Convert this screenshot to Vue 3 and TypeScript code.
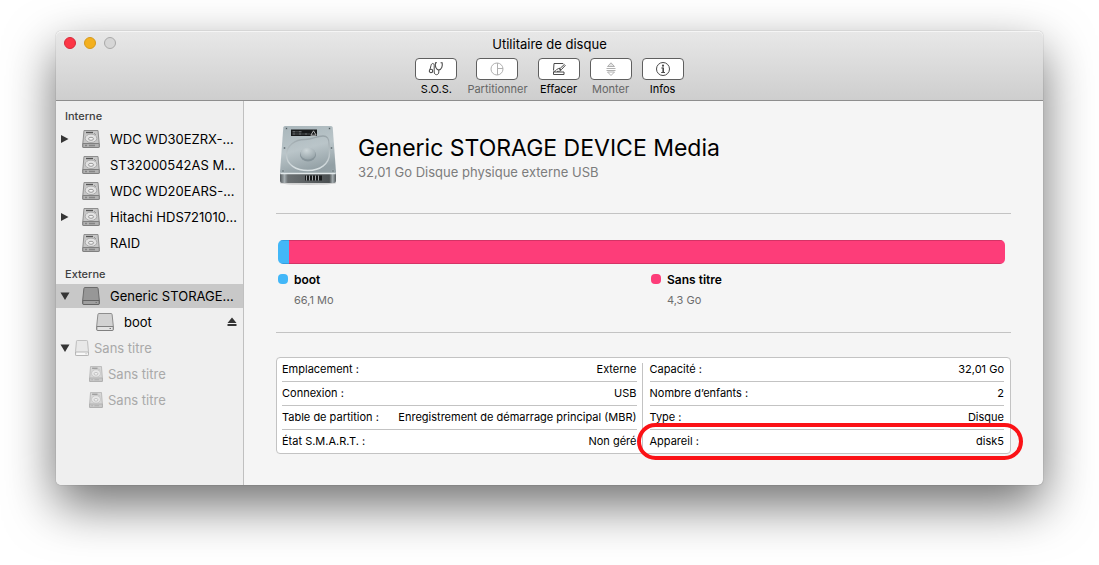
<script setup lang="ts">
import { ref } from 'vue'

interface Tool {
  id: string
  label: string
  enabled: boolean
}

interface TreeRow {
  id: string
  name: string
  icon: 'internal' | 'external'
  arrow?: 'closed' | 'open'
  level: 'drive' | 'volume' | 'ghost' | 'ghost-child'
  eject?: boolean
}

interface Info {
  label: string
  value: string
  marked?: boolean
}

const tools: Tool[] = [
  { id: 'sos', label: 'S.O.S.', enabled: true },
  { id: 'partition', label: 'Partitionner', enabled: false },
  { id: 'erase', label: 'Effacer', enabled: true },
  { id: 'mount', label: 'Monter', enabled: false },
  { id: 'info', label: 'Infos', enabled: true },
]

const groups: { title: string; rows: TreeRow[] }[] = [
  {
    title: 'Interne',
    rows: [
      { id: 'wd30', name: 'WDC WD30EZRX-…', icon: 'internal', arrow: 'closed', level: 'drive' },
      { id: 'st32', name: 'ST32000542AS M…', icon: 'internal', level: 'drive' },
      { id: 'wd20', name: 'WDC WD20EARS-…', icon: 'internal', level: 'drive' },
      { id: 'hitachi', name: 'Hitachi HDS721010…', icon: 'internal', arrow: 'closed', level: 'drive' },
      { id: 'raid', name: 'RAID', icon: 'internal', level: 'drive' },
    ],
  },
  {
    title: 'Externe',
    rows: [
      { id: 'generic', name: 'Generic STORAGE…', icon: 'external', arrow: 'open', level: 'drive' },
      { id: 'boot', name: 'boot', icon: 'external', level: 'volume', eject: true },
      { id: 'untitled', name: 'Sans titre', icon: 'external', arrow: 'open', level: 'ghost' },
      { id: 'untitled-1', name: 'Sans titre', icon: 'internal', level: 'ghost-child' },
      { id: 'untitled-2', name: 'Sans titre', icon: 'internal', level: 'ghost-child' },
    ],
  },
]

const selected = ref('generic')

const partitions = [
  { name: 'boot', size: '66,1 Mo', tone: 'blue', share: 1.5 },
  { name: 'Sans titre', size: '4,3 Go', tone: 'pink', share: 98.5 },
]

const infoTables: Info[][] = [
  [
    { label: 'Emplacement :', value: 'Externe' },
    { label: 'Connexion :', value: 'USB' },
    { label: 'Table de partition :', value: 'Enregistrement de démarrage principal (MBR)' },
    { label: 'État S.M.A.R.T. :', value: 'Non géré' },
  ],
  [
    { label: 'Capacité :', value: '32,01 Go' },
    { label: 'Nombre d’enfants :', value: '2' },
    { label: 'Type :', value: 'Disque' },
    { label: 'Appareil :', value: 'disk5', marked: true },
  ],
]
</script>

<template>
  <div class="desktop">
    <div class="window">
      <header class="titlebar">
        <div class="lights">
          <button class="light close" type="button" aria-label="Fermer"></button>
          <button class="light minimize" type="button" aria-label="Réduire"></button>
          <button class="light zoom" type="button" aria-label="Agrandir" disabled></button>
        </div>
        <h1 class="window-title">Utilitaire de disque</h1>
        <div class="toolbar">
          <div v-for="t in tools" :key="t.id" class="tool" :class="{ off: !t.enabled }">
            <button
              class="tool-button"
              type="button"
              :disabled="!t.enabled"
              :aria-labelledby="'tool-' + t.id"
            >
              <svg v-if="t.id === 'sos'" width="16" height="16" viewBox="0 0 16 16" fill="none" stroke="currentColor">
                <path d="M9 1.700H7.500C6.800 5 7.800 8.500 10.800 9c3-.5 4-4 3.300-7.300h-1.500" stroke-width="1.100" />
                <path d="M10.800 9v2c0 1.700-1 2.700-2.300 2.700S6.200 12.700 6.200 11V4.500c0-1.200-.5-2-1.400-2S3.300 3.200 3 4.500L2 8.500" stroke-width="1" />
                <circle cx="3" cy="10" r="1.700" stroke-width="1.100" />
              </svg>
              <svg v-else-if="t.id === 'partition'" width="16" height="16" viewBox="0 0 16 16" fill="none" stroke="currentColor">
                <circle cx="8" cy="8" r="6" />
                <path d="M8.500 2v12M8.500 7.500H14" />
              </svg>
              <svg v-else-if="t.id === 'erase'" width="16" height="16" viewBox="0 0 16 16" fill="none" stroke="currentColor">
                <path d="M12 3V2.500H3L2.500 9.500" />
                <path d="M2.500 11h10.500v2.500H2.500z" />
                <path d="M2.500 10.500c2.500.3 3-2.700 5-3l1.800-.3L13.300 3.500l.9 1L10.500 8.500c-.3 1.600-2.500 1.900-4.500 1.900" />
                <path d="M8 7.500 10 9" stroke-width="1.300" />
              </svg>
              <svg v-else-if="t.id === 'mount'" width="16" height="16" viewBox="0 0 16 16" fill="none" stroke="currentColor">
                <path d="M4.500 5.500 8 1.800l3.500 3.700z" fill="currentColor" fill-opacity=".35" />
                <path d="M3.500 7.500h9M3.500 9.500h9" />
                <path d="M4.500 11h7L8 14.500z" />
              </svg>
              <svg v-else width="16" height="16" viewBox="0 0 16 16" fill="none" stroke="currentColor">
                <circle cx="8" cy="8" r="6.500" />
                <circle cx="8" cy="4.700" r="1.100" fill="currentColor" stroke="none" />
                <path d="M6.300 7H8M6.200 11.500h3.800" />
                <path d="M8.200 6.500v5" stroke-width="1.600" />
              </svg>
            </button>
            <span :id="'tool-' + t.id" class="tool-label">{{ t.label }}</span>
          </div>
        </div>
      </header>

      <div class="body">
        <nav class="sidebar" aria-label="Disques">
          <section v-for="g in groups" :key="g.title" class="group">
            <h2 class="group-title">{{ g.title }}</h2>
            <ul class="rows">
              <li
                v-for="r in g.rows"
                :key="r.id"
                class="row"
                :class="[r.level, { selected: r.id === selected }]"
              >
                <span class="arrow-slot">
                  <button v-if="r.arrow" class="arrow" type="button" :aria-label="'Développer ' + r.name" :aria-expanded="r.arrow === 'open'">
                    <svg width="10" height="10" viewBox="0 0 10 10" fill="#353535">
                      <path v-if="r.arrow === 'closed'" d="M1 1v8l7.500-4z" />
                      <path v-else d="M.5 1.500h9L5 9z" />
                    </svg>
                  </button>
                </span>
                <button class="pick" type="button" @click="selected = r.id">
                  <svg class="disk-icon" viewBox="0 0 18 18" preserveAspectRatio="none">
                    <template v-if="r.icon === 'internal'">
                      <path class="shell" d="M2 .5h14l1.200 13v3.500q0 .5-.5.5H1.300q-.5 0-.5-.5v-3.500z" />
                      <path class="front" d="M.8 13.500h16.400v3.500q0 .5-.5.5H1.300q-.5 0-.5-.5z" />
                      <path d="M4 2.500h7" stroke="#555" stroke-width="1.300" />
                      <ellipse cx="9" cy="8.300" rx="5.800" ry="4.200" fill="#e2e2e2" stroke="#a0a0a0" stroke-width=".8" />
                      <ellipse cx="9" cy="8.800" rx="2.500" ry="1.500" fill="#f5f5f5" stroke="#858585" stroke-width=".8" />
                      <path d="m12 3 2 2" stroke="#999" />
                      <path d="M3 15.500h2M7 15.500h6" stroke="#858585" stroke-width="1.300" />
                    </template>
                    <template v-else>
                      <path class="shell" d="M3 .5h12q1 0 1.100 1l1.200 11.500v3.500q0 1-1 1H1.700q-1 0-1-1V13L1.900 1.500q.1-1 1.100-1z" />
                      <path class="front" d="M.8 13.500h16.400v3q0 1-1 1H1.800q-1 0-1-1z" />
                      <path d="M13.500 15.500h1.500" stroke="#777" />
                    </template>
                  </svg>
                  <span class="name">{{ r.name }}</span>
                </button>
                <button v-if="r.eject" class="eject" type="button" aria-label="Éjecter boot">
                  <svg width="10" height="10" viewBox="0 0 10 10" fill="#353535">
                    <path d="M5 .5 9.500 6h-9zM.5 7h9v2h-9z" />
                  </svg>
                </button>
              </li>
            </ul>
          </section>
        </nav>

        <main class="detail">
          <div class="summary">
            <svg class="hero" width="60" height="64" viewBox="0 0 60 64" aria-hidden="true">
              <defs>
                <linearGradient id="plate" x1="0" y1="0" x2=".3" y2="1">
                  <stop offset="0" stop-color="#a9b6bb" />
                  <stop offset=".55" stop-color="#bac5c9" />
                  <stop offset="1" stop-color="#93a0a5" />
                </linearGradient>
                <linearGradient id="rim" x1="0" y1="0" x2="0" y2="1">
                  <stop offset="0" stop-color="#98a3a8" />
                  <stop offset="1" stop-color="#dbe3e5" />
                </linearGradient>
                <linearGradient id="edge" x1="0" y1="0" x2="1" y2="0">
                  <stop offset="0" stop-color="#555b5e" />
                  <stop offset=".08" stop-color="#a5adb0" />
                  <stop offset=".14" stop-color="#6b7072" />
                  <stop offset=".88" stop-color="#4b5052" />
                  <stop offset=".94" stop-color="#a5adb0" />
                  <stop offset="1" stop-color="#555b5e" />
                </linearGradient>
                <radialGradient id="hub" cx=".4" cy=".25" r=".8">
                  <stop offset="0" stop-color="#cdd6d9" />
                  <stop offset="1" stop-color="#95a2a7" />
                </radialGradient>
              </defs>
              <ellipse cx="30" cy="60" rx="28" ry="2" fill="#000" opacity=".15" />
              <path d="M2 50h56v8q0 2-2 2H4q-2 0-2-2z" fill="url(#edge)" />
              <path d="M7 3h46q1.500 0 1.700 1.500L58 49q0 2-2 2H4q-2 0-2-2L5.300 4.500Q5.500 3 7 3z" fill="url(#plate)" />
              <path d="M2.300 50.500h55.400" stroke="#e3e9eb" stroke-width="1.300" />
              <path d="M27 16.500C35 16.500 38 13 45 13c5 0 6 3 6 8l.5 9C51.500 41 42 47.500 30 47.500S8.500 41.500 8.500 32 17 16.500 27 16.500z" fill="none" stroke="url(#rim)" stroke-width="1.400" />
              <ellipse cx="30" cy="32" rx="8" ry="6.500" fill="#87949a" />
              <ellipse cx="30" cy="30.500" rx="7.500" ry="6" fill="url(#hub)" />
              <path d="M13 6.500h26V13H13z" fill="#17191a" />
              <path d="M14.500 8.800h10M14.500 11h17" stroke="#8d9395" stroke-width=".9" stroke-dasharray="3 1 1 1" />
              <path d="m35.500 7.800 2.700 4.400h-5.400z" fill="none" stroke="#ddd" stroke-width=".8" />
              <g fill="#4a585e" stroke="#c6cdd0" stroke-width=".4">
                <circle cx="8.500" cy="5.500" r="1" /><circle cx="51.500" cy="5.500" r="1" />
                <circle cx="6.500" cy="25" r="1" /><circle cx="53.500" cy="25" r="1" />
                <circle cx="5" cy="48" r="1" /><circle cx="55" cy="48" r="1" />
              </g>
              <path d="M27 52.500h17v5H27z" fill="#17191a" />
              <path d="M28.500 52.500v5M31.500 52.500v5M34.500 52.500v5M37.500 52.500v5M40.500 52.500v5" stroke="#a0a5a7" stroke-width="1" />
            </svg>
            <div>
              <h2 class="disk-title">Generic STORAGE DEVICE Media</h2>
              <p class="disk-sub">32,01 Go Disque physique externe USB</p>
            </div>
          </div>

          <section class="usage" aria-label="Partitions">
            <div class="bar">
              <div
                v-for="p in partitions"
                :key="p.name"
                class="segment"
                :class="p.tone"
                :style="{ width: p.share + '%' }"
              ></div>
            </div>
            <ul class="legend">
              <li v-for="p in partitions" :key="p.name" class="legend-item">
                <span class="dot" :class="p.tone"></span>
                <div>
                  <strong class="legend-name">{{ p.name }}</strong>
                  <span class="legend-size">{{ p.size }}</span>
                </div>
              </li>
            </ul>
          </section>

          <div class="info">
            <table v-for="(list, i) in infoTables" :key="i" class="info-table">
              <tbody>
                <tr v-for="row in list" :key="row.label" :class="{ marked: row.marked }">
                  <th scope="row">{{ row.label }}</th>
                  <td>{{ row.value }}</td>
                </tr>
              </tbody>
            </table>
          </div>
        </main>
      </div>
    </div>
  </div>
</template>

<style>
body {
  margin: 0;
  background: #fff;
}
</style>

<style scoped>
.desktop {
  box-sizing: border-box;
  min-height: 100vh;
  padding: 31px 56px 80px;
  overflow: hidden;
  font-family: Inter, "Liberation Sans", sans-serif;
  font-size: 13px;
  color: #000;
  display: flex;
}

.window {
  flex: 1;
  min-width: 0;
  display: flex;
  flex-direction: column;
  border-radius: 5px;
  background: #f5f5f5;
  box-shadow: 0 0 1px rgba(0, 0, 0, 0.5), 0 20px 50px rgba(0, 0, 0, 0.57);
}

h1, h2, p, ul {
  margin: 0;
  padding: 0;
  font-weight: 400;
  list-style: none;
}

button {
  padding: 0;
  border: 0;
  background: none;
  font: inherit;
  color: inherit;
}

svg {
  display: block;
}

.titlebar {
  display: grid;
  grid-template-columns: 1fr auto 1fr;
  padding: 3px 8px 2px;
  border-bottom: 1px solid #8e8e8e;
  border-radius: 5px 5px 0 0;
  background: linear-gradient(#e8e8e8, #cecece);
  box-shadow: inset 0 1px #f5f5f5;
}

.lights {
  display: flex;
  gap: 8px;
  padding-top: 3px;
}

.light {
  box-sizing: border-box;
  width: 12px;
  height: 12px;
  border: 1px solid #d62a3b;
  border-radius: 50%;
  background: #fc3646;
}

.light.minimize {
  border-color: #d69a1c;
  background: #f3b01f;
}

.light.zoom {
  border-color: #a9a9a9;
  background: #d6d6d6;
}

.window-title {
  font-size: 13px;
  line-height: 20px;
}

.toolbar {
  grid-column: 1 / -1;
  display: flex;
  justify-content: center;
  gap: 10px;
  padding-top: 4px;
}

.tool {
  display: flex;
  flex-direction: column;
  align-items: center;
  min-width: 42px;
}

.tool-button {
  box-sizing: border-box;
  width: 42px;
  height: 22px;
  display: flex;
  align-items: center;
  justify-content: center;
  border: 1px solid #5f5f5f;
  border-radius: 4px;
  background: #fff;
  color: #4a4a4a;
}

.off .tool-button {
  color: #b0b0b0;
}

.tool-label {
  font-size: 11px;
  line-height: 18px;
}

.off .tool-label {
  color: #666;
}

.body {
  flex: 1;
  display: grid;
  grid-template-columns: 188px minmax(0, 1fr);
}

.sidebar {
  box-sizing: border-box;
  padding-top: 6px;
  border-right: 1px solid #c0c0c0;
  border-radius: 0 0 0 5px;
  background: #efefef;
}

.group {
  padding-bottom: 8px;
}

.group-title {
  padding-left: 9px;
  font-size: 11px;
  font-weight: 500;
  line-height: 18px;
  color: #404040;
}

.rows {
  display: flex;
  flex-direction: column;
  gap: 2px;
  padding: 2px 0;
}

.group + .group .rows {
  padding-top: 1px;
}

.row {
  display: flex;
  align-items: center;
  height: 24px;
  padding: 0 6px 0 4px;
}

.row.selected {
  background: #c8c8c8;
}

.arrow-slot {
  flex: none;
  width: 22px;
}

.ghost .arrow-slot {
  width: 15px;
}

.ghost-child .arrow-slot {
  width: 29px;
}

.volume .arrow-slot {
  width: 36px;
}

.arrow {
  display: block;
}

.pick {
  flex: 1;
  min-width: 0;
  display: flex;
  align-items: center;
  gap: 10px;
  text-align: left;
  line-height: 24px;
}

.name {
  white-space: nowrap;
}

.disk-icon {
  flex: none;
  width: 18px;
  height: 18px;
}

.shell {
  fill: #c6c6c6;
  stroke: #8e8e8e;
}

.front {
  fill: #b0b0b0;
  stroke: #808080;
}

.selected .shell {
  fill: #979797;
  stroke: #6c6c6c;
}

.selected .front {
  fill: #9f9f9f;
  stroke: #646464;
}

.volume .shell {
  fill: #d2d2d2;
}

.volume .front {
  fill: #e2e2e2;
}

.ghost .pick,
.ghost-child .pick {
  gap: 5px;
  color: #a9a9a9;
}

.ghost .disk-icon,
.ghost-child .disk-icon {
  width: 14px;
  height: 16px;
  opacity: 0.6;
}

.ghost .shell {
  fill: #e4e4e4;
}

.ghost .front {
  fill: #fff;
}

.detail {
  padding: 0 32px;
}

.summary {
  display: flex;
  gap: 20px;
  height: 90px;
  padding: 22px 0 0 2px;
  border-bottom: 1px solid #c3c3c3;
}

.disk-title {
  padding-top: 11px;
  font-size: 23px;
  line-height: 29px;
}

.disk-sub {
  font-size: 13px;
  line-height: 18px;
  color: #7c7c7c;
}

.usage {
  padding: 26px 6px 22px 2px;
  border-bottom: 1px solid #c3c3c3;
}

.bar {
  display: flex;
  height: 24px;
  overflow: hidden;
  border-radius: 5px;
}

.blue {
  background: #42b7f8;
}

.pink {
  background: #fd3d79;
}

.segment {
  box-sizing: border-box;
  border: solid rgba(120, 30, 60, 0.3);
  border-width: 1px 0;
}

.segment.blue {
  border-color: rgba(0, 60, 120, 0.2);
}

.legend {
  display: grid;
  grid-template-columns: 1fr 1fr;
  gap: 19px;
  padding-top: 6px;
}

.legend-item {
  display: flex;
  gap: 6px;
  font-size: 11px;
  line-height: 20px;
}

.dot {
  width: 10px;
  height: 10px;
  margin-top: 4px;
  border-radius: 4px;
}

.legend-name,
.legend-size {
  display: block;
}

.legend-name {
  font-size: 12px;
  font-weight: 600;
}

.legend-size {
  color: #6e6e6e;
}

.info {
  display: grid;
  grid-template-columns: calc(50% - 2px) 1fr;
  margin: 24px 0 31px;
  border: 1px solid #c3c3c3;
  border-radius: 4px;
  background: #fff;
}

.info-table {
  width: 100%;
  margin-top: 5px;
  padding: 0 5px;
  border-collapse: separate;
  border-spacing: 0;
  font-size: 11px;
  line-height: 23px;
}

.info-table + .info-table {
  padding: 0 6px 0 7px;
  border-left: 1px solid #c3c3c3;
}

.info-table th,
.info-table td {
  padding: 0;
  border-bottom: 1px solid #c3c3c3;
  font-weight: 400;
  text-align: left;
  white-space: nowrap;
}

.info-table td {
  text-align: right;
}

.info-table tr:first-child > * {
  padding-bottom: 5px;
  line-height: 13px;
}

.info-table tr:last-child > * {
  border-bottom: 0;
}

.marked {
  position: relative;
}

/* Red highlight around the device name */
.marked::after {
  content: "";
  position: absolute;
  inset: -7px -19px -7px -13px;
  border: 4px solid #fb1216;
  border-radius: 19px;
}
</style>
